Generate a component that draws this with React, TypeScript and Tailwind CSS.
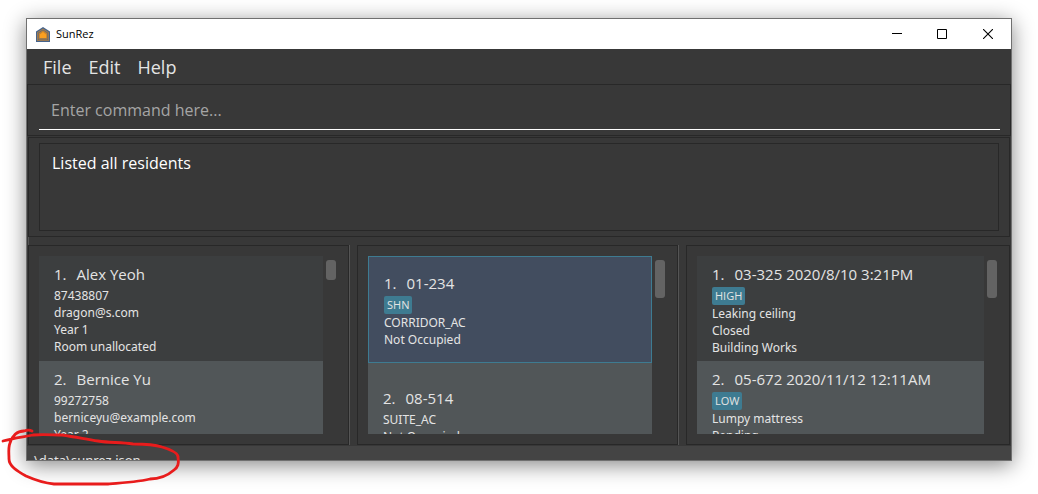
import React from 'react';

type Entry = { title: string; tag?: string; lines: string[]; selected?: boolean };

const residents: Entry[] = [
  { title: 'Alex Yeoh', lines: ['87438807', 'dragon@s.com', 'Year 1', 'Room unallocated'] },
  { title: 'Bernice Yu', lines: ['99272758', 'berniceyu@example.com', 'Year 2'] },
];

const rooms: Entry[] = [
  { title: '01-234', tag: 'SHN', lines: ['CORRIDOR_AC', 'Not Occupied'], selected: true },
  { title: '08-514', lines: ['SUITE_AC', 'Not Occupied'] },
];

const issues: Entry[] = [
  { title: '03-325 2020/8/10 3:21PM', tag: 'HIGH', lines: ['Leaking ceiling', 'Closed', 'Building Works'] },
  { title: '05-672 2020/11/12 12:11AM', tag: 'LOW', lines: ['Lumpy mattress', 'Pending'] },
];

function Row({ entry, index, centered }: { entry: Entry; index: number; centered?: boolean }) {
  const look = entry.selected
    ? 'h-[107px] border border-[#3e7b91] bg-[#424d5f]'
    : index % 2 === 0
      ? 'h-[105px] bg-[#3c3e3f]'
      : 'h-[105px] bg-[#515658]';
  const align = centered ? 'justify-center pt-px' : 'pt-[7px]';
  return (
    <li className={`flex flex-col px-[15px] ${align} ${look}`}>
      <h2 className="mb-px flex gap-[10px] text-[15px] leading-[23px] whitespace-nowrap">
        <span>{index + 1}.</span>
        <span>{entry.title}</span>
      </h2>
      {entry.tag && (
        <span className="h-[18px] self-start rounded-xs bg-[#3e7b91] px-[3px] text-[11px] leading-[18px]">{entry.tag}</span>
      )}
      {entry.lines.map((line) => (
        <p key={line} className="font-['Noto_Sans',sans-serif] text-xs leading-[17px] whitespace-nowrap">{line}</p>
      ))}
    </li>
  );
}

type PanelProps = { label: string; entries: Entry[]; short?: boolean; centered?: boolean };

function Panel({ label, entries, short, centered }: PanelProps) {
  return (
    <section aria-label={label} className="flex min-w-0 border border-[#282828] p-[10px]">
      <ol className="h-[178px] min-w-0 flex-1 overflow-hidden">
        {entries.map((entry, i) => (
          <Row key={entry.title} entry={entry} index={i} centered={centered} />
        ))}
      </ol>
      <div className="w-[15px] px-[3px] pt-1">
        <div className={`w-[10px] rounded-[3px] bg-[#636363] ${short ? 'h-5' : 'h-[38px]'}`} />
      </div>
    </section>
  );
}

function Logo() {
  return (
    <svg className="h-[15px] w-[14px]" viewBox="0 0 14 15" aria-hidden="true">
      <path d="M7 0 L14 4.5 V15 H0 V4.5 Z" fill="#45638c" />
      <path d="M7 1.5 L12.8 5.2 V13.9 H1.2 V5.2 Z" fill="#b08047" />
      <path d="M7 2.4 L12 5.7 V13.2 H2 V5.7 Z" fill="#56657c" />
      <path d="M7 3.2 L11.4 6.3 V12.6 H2.6 V6.3 Z" fill="#c5822f" />
      <path d="M7 5 L10.2 7.4 V11 H3.8 V7.4 Z" fill="#fb9f20" />
      <path d="M2.6 11.6 H11.4" stroke="#8a7558" strokeWidth="0.7" />
    </svg>
  );
}

export default function App() {
  return (
    <main className="relative min-h-screen bg-white px-[26px] pt-[18px] pb-[33px] font-['Open_Sans','Noto_Sans',sans-serif] text-[#e4e4e4]">
      <div className="border border-[#707070] bg-[#383838] shadow-[0_4px_20px_rgba(0,0,0,0.48)]">
        <header className="flex h-[30px] items-center bg-white pl-[9px] text-black">
          <Logo />
          <h1 className="ml-[6px] flex-1 text-[11px]">SunRez</h1>
          <button aria-label="Minimize" className="flex h-full w-[45px] items-center justify-center">
            <svg width="10" height="10" viewBox="0 0 10 10"><path d="M0 4.5H10" stroke="currentColor" /></svg>
          </button>
          <button aria-label="Maximize" className="flex h-full w-[46px] items-center justify-center">
            <svg width="10" height="10" viewBox="0 0 10 10"><path d="M.5 .5H9.5V9.5H.5Z" fill="none" stroke="currentColor" /></svg>
          </button>
          <button aria-label="Close" className="flex h-full w-[46px] items-center justify-center">
            <svg width="10" height="10" viewBox="0 0 10 10"><path d="M0 0L10 10M10 0L0 10" stroke="currentColor" strokeWidth="1.1" /></svg>
          </button>
        </header>

        <nav className="flex h-[35px] items-center gap-[17px] px-4 text-lg">
          <button>File</button>
          <button>Edit</button>
          <button>Help</button>
        </nav>

        <div className="h-[52px] border border-[#282828] pr-[10px] pl-[11px]">
          <input
            aria-label="Command"
            placeholder="Enter command here..."
            className="h-[45px] w-full border-b border-white bg-transparent px-3 pt-[5px] text-base outline-none placeholder:text-[#a5a5a5]"
          />
        </div>

        <div className="mx-px mt-px h-[100px] border border-[#282828] px-[10px] py-[5px]">
          <output className="block h-[88px] border border-[#282828] px-3 pt-[7px] text-base leading-6 text-white">
            Listed all residents
          </output>
        </div>

        <div className="mx-px h-2 border-l border-[#555]" />

        <div className="mx-px grid grid-cols-[321fr_8px_321fr_8px_324fr]">
          <Panel label="Residents" entries={residents} short />
          <div className="border-l border-[#555]" />
          <Panel label="Rooms" entries={rooms} centered />
          <div className="border-l border-[#555]" />
          <Panel label="Issues" entries={issues} />
        </div>

        <footer className="mt-px h-[14px] overflow-hidden bg-[#444] pl-[7px] pt-1 font-['Noto_Sans',sans-serif] text-[13px] leading-[20px]">
          \data\sunrez.json
        </footer>
      </div>

      <svg className="pointer-events-none absolute top-[425px] left-0 h-[65px] w-[184px]" viewBox="0 425 184 65" fill="none" aria-hidden="true">
        <path
          d="M3 441 C13 438 23 437 33 435 C43 434 53 435 62 435 C76 437 85 439 98 441 C110 443 120 442 133 444 C144 444 156 445 162 447 C172 450 178 453 178 457 C179 464 178 467 174 470 C166 477 158 479 150 479 C137 482 122 483 108 484 H54 C44 483 35 480 26 476 C17 471 9 466 9 459 C9 453 8 448 10 443 C12 436 17 431 24 431 C27 430 30 430 32 431"
          stroke="#e81c1c"
          strokeWidth="2.8"
          strokeLinecap="round"
          strokeLinejoin="round"
        />
      </svg>
    </main>
  );
}
